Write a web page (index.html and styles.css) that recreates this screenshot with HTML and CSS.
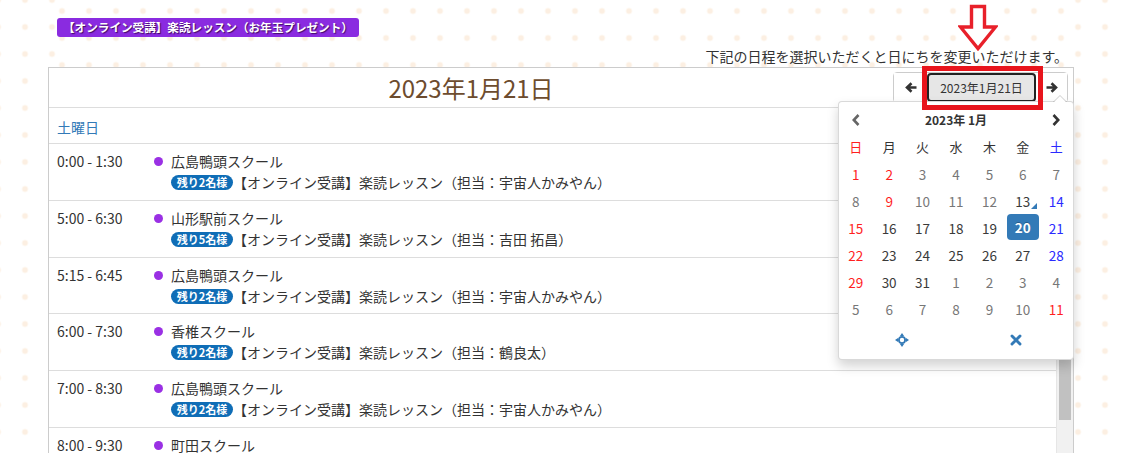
FILE: index.html
```html
<!DOCTYPE html>
<html lang="ja">
<head>
<meta charset="utf-8">
<title>楽読レッスン</title>
<link rel="stylesheet" href="styles.css">
</head>
<body>
<div class="wrap">
  <div class="top">
    <span class="tag">【オンライン受講】楽読レッスン（お年玉プレゼント）</span>
    <p class="note">下記の日程を選択いただくと日にちを変更いただけます。</p>
    <svg class="red-arrow" width="40" height="50" viewBox="0 0 40 50">
      <polygon points="13.5,3.5 26.5,3.5 26.5,24 37.5,24 20,45.5 2.5,24 13.5,24" fill="#fff" stroke="#e8202a" stroke-width="3.4" stroke-linejoin="miter"/>
    </svg>
  </div>
  <div class="box">
    <div class="toolbar">
      <div class="tb-left"></div>
      <h2 class="title">2023年1月21日</h2>
      <div class="btn-group">
        <button class="btn nav" type="button">
          <svg width="12" height="11" viewBox="0 0 12 11"><path d="M11.5 5.5H2.5M6.5 1.2L2 5.5L6.5 9.8" fill="none" stroke="#333" stroke-width="2.6"/></svg>
        </button>
        <div class="date-wrap">
          <button class="btn date" type="button">2023年1月21日</button>
          <span class="highlight"></span>
        </div>
        <button class="btn nav" type="button">
          <svg width="12" height="11" viewBox="0 0 12 11"><path d="M0.5 5.5H9.5M5.5 1.2L10 5.5L5.5 9.8" fill="none" stroke="#333" stroke-width="2.6"/></svg>
        </button>
      </div>
    </div>
    <div class="list">
      <div class="list-body">
        <div class="heading">土曜日</div>
        <div class="row">
          <div class="time">0:00 - 1:30</div>
          <span class="marker"></span>
          <div class="info">
            <div class="name">広島鴨頭スクール</div>
            <div class="line2"><span class="remain">残り2名様</span><span>【オンライン受講】楽読レッスン（担当：宇宙人かみやん）</span></div>
          </div>
        </div>
        <div class="row">
          <div class="time">5:00 - 6:30</div>
          <span class="marker"></span>
          <div class="info">
            <div class="name">山形駅前スクール</div>
            <div class="line2"><span class="remain">残り5名様</span><span>【オンライン受講】楽読レッスン（担当：吉田 拓昌）</span></div>
          </div>
        </div>
        <div class="row">
          <div class="time">5:15 - 6:45</div>
          <span class="marker"></span>
          <div class="info">
            <div class="name">広島鴨頭スクール</div>
            <div class="line2"><span class="remain">残り2名様</span><span>【オンライン受講】楽読レッスン（担当：宇宙人かみやん）</span></div>
          </div>
        </div>
        <div class="row">
          <div class="time">6:00 - 7:30</div>
          <span class="marker"></span>
          <div class="info">
            <div class="name">香椎スクール</div>
            <div class="line2"><span class="remain">残り2名様</span><span>【オンライン受講】楽読レッスン（担当：鶴良太）</span></div>
          </div>
        </div>
        <div class="row">
          <div class="time">7:00 - 8:30</div>
          <span class="marker"></span>
          <div class="info">
            <div class="name">広島鴨頭スクール</div>
            <div class="line2"><span class="remain">残り2名様</span><span>【オンライン受講】楽読レッスン（担当：宇宙人かみやん）</span></div>
          </div>
        </div>
        <div class="row">
          <div class="time">8:00 - 9:30</div>
          <span class="marker"></span>
          <div class="info">
            <div class="name">町田スクール</div>
            <div class="line2"><span class="remain">残り2名様</span><span>【オンライン受講】楽読レッスン</span></div>
          </div>
        </div>
      </div>
      <div class="scrollbar"><div class="thumb"></div></div>
    </div>

    <div class="picker">
      <table class="cal">
        <thead>
          <tr class="cal-head">
            <th class="prev"><svg width="8" height="12" viewBox="0 0 8 12"><path d="M6.5 1L1.8 6L6.5 11" fill="none" stroke="#666" stroke-width="2.6"/></svg></th>
            <th colspan="5" class="month">2023年 1月</th>
            <th class="next"><svg width="8" height="12" viewBox="0 0 8 12"><path d="M1.5 1L6.2 6L1.5 11" fill="none" stroke="#333" stroke-width="2.6"/></svg></th>
          </tr>
          <tr class="dow">
            <th class="hol">日</th><th>月</th><th>火</th><th>水</th><th>木</th><th>金</th><th class="sat">土</th>
          </tr>
        </thead>
        <tbody>
          <tr><td class="hol">1</td><td class="hol">2</td><td class="old">3</td><td class="old">4</td><td class="old">5</td><td class="old">6</td><td class="old">7</td></tr>
          <tr><td class="old">8</td><td class="hol">9</td><td class="old">10</td><td class="old">11</td><td class="old">12</td><td class="today">13</td><td class="sat">14</td></tr>
          <tr><td class="hol">15</td><td>16</td><td>17</td><td>18</td><td>19</td><td class="active"><span>20</span></td><td class="sat">21</td></tr>
          <tr><td class="hol">22</td><td>23</td><td>24</td><td>25</td><td>26</td><td>27</td><td class="sat">28</td></tr>
          <tr><td class="hol">29</td><td>30</td><td>31</td><td class="old">1</td><td class="old">2</td><td class="old">3</td><td class="old">4</td></tr>
          <tr><td class="old">5</td><td class="old">6</td><td class="old">7</td><td class="old">8</td><td class="old">9</td><td class="old">10</td><td class="hol">11</td></tr>
        </tbody>
      </table>
      <div class="cal-foot">
        <span class="foot-btn">
          <svg width="14" height="14" viewBox="0 0 14 14">
            <circle cx="7" cy="7" r="3.1" fill="none" stroke="#337ab7" stroke-width="1.8"/>
            <polygon points="7,0 4.9,3 9.1,3" fill="#337ab7"/>
            <polygon points="7,14 4.9,11 9.1,11" fill="#337ab7"/>
            <polygon points="0,7 3,4.9 3,9.1" fill="#337ab7"/>
            <polygon points="14,7 11,4.9 11,9.1" fill="#337ab7"/>
          </svg>
        </span>
        <span class="foot-btn">
          <svg width="12" height="12" viewBox="0 0 12 12"><path d="M2 2L10 10M10 2L2 10" stroke="#337ab7" stroke-width="2.9" stroke-linecap="round"/></svg>
        </span>
      </div>
    </div>
  </div>
</div>
</body>
</html>
```

FILE: styles.css
```css
* { box-sizing: border-box; }

html, body {
  margin: 0;
  height: 453px;
  overflow: hidden;
}

body {
  font-family: "Noto Sans CJK JP", "Noto Sans", sans-serif;
  color: #333;
  font-size: 14px;
  background-color: #fff;
  background-image: radial-gradient(circle at 13.5px 13.5px, #fcefe2 2.6px, rgba(252, 239, 226, 0) 3.3px);
  background-size: 27px 27px;
  background-position: 11.5px -13.5px;
}

.wrap {
  margin-left: 48px;
  width: 1026px;
  position: relative;
}

.top {
  position: relative;
  margin-left: 8px;
  height: 67px;
  padding-top: 18px;
  background-color: #fff;
  background-image: radial-gradient(circle at 13.5px 13.5px, #fcefe2 2.6px, rgba(252, 239, 226, 0) 3.3px);
  background-size: 27px 27px;
  background-position: -7.5px -2.5px;
}

.tag {
  display: block;
  width: max-content;
  margin-left: 1px;
  height: 19px;
  line-height: 19px;
  padding: 0 6px;
  background: #8a2be0;
  color: #fff;
  font-size: 11.6px;
  font-weight: bold;
  border-radius: 3px;
  text-shadow: 1px 1px 1px rgba(40, 0, 60, 0.75);
}

.note {
  margin: 9px 0 1px;
  line-height: 20px;
  font-size: 14px;
  text-align: right;
  padding-right: 6px;
  color: #333;
}

.red-arrow {
  position: absolute;
  left: 902px;
  top: 3px;
}

.box {
  position: relative;
  border: 1px solid #ccc;
  background: #fff;
  height: 420px;
}

.toolbar {
  display: flex;
  justify-content: space-between;
  align-items: center;
  height: 40px;
  border-bottom: 1px solid #ddd;
  padding-right: 5px;
}

.tb-left { width: 0; }

.title {
  margin: 0;
  font-size: 24px;
  font-weight: normal;
  line-height: 1;
  color: #6d4c2e;
}

.btn-group {
  align-self: flex-start;
  margin-top: 4px;
  display: flex;
  height: 31px;
  border: 1px solid #ccc;
  border-radius: 4px;
  background: #fff;
}

.btn {
  font-family: inherit;
  margin: 0;
  padding: 0;
  background: #fff;
  border: none;
  cursor: pointer;
  display: flex;
  align-items: center;
  justify-content: center;
}

.nav {
  width: 33px;
  height: 29px;
}

.nav:last-child { width: 31px; }

.date-wrap {
  position: relative;
}

.date {
  width: 109px;
  height: 29px;
  background: #e6e6e6;
  border: 2px solid #222;
  border-radius: 4px;
  font-size: 12px;
  color: #333;
}

.highlight {
  position: absolute;
  left: -5px;
  top: -7px;
  width: 121px;
  height: 44px;
  border: 5px solid #e8141c;
  z-index: 5;
}

.list {
  display: flex;
  height: 380px;
}

.list-body {
  flex: 1;
}

.heading {
  height: 36px;
  padding: 9px 8px 0;
  line-height: 20px;
  color: #337ab7;
  border-bottom: 1px solid #ddd;
}

.row {
  display: flex;
  align-items: flex-start;
  height: 56.8px;
  padding: 7px 0 0 8px;
  border-bottom: 1px solid #ddd;
  line-height: 21px;
}

.time {
  width: 97px;
  flex: none;
}

.marker {
  flex: none;
  width: 9px;
  height: 9px;
  border-radius: 50%;
  background: #9a30e4;
  margin: 6px 8px 0 0;
}

.info { flex: 1; }

.line2 {
  display: flex;
  align-items: center;
  white-space: nowrap;
}

.remain {
  display: inline-block;
  flex: none;
  width: 62px;
  height: 15px;
  line-height: 15px;
  text-align: center;
  border-radius: 8px;
  background: #0f6db6;
  color: #fff;
  font-size: 11px;
  font-weight: bold;
}

.scrollbar {
  width: 17px;
  background: #f1f1f1;
  border-left: 1px solid #e6e6e6;
  padding: 0 2px;
}

.thumb {
  margin-top: 150px;
  height: 162px;
  background: #c1c1c1;
}

/* date picker popup */
.picker {
  position: absolute;
  left: 789px;
  top: 33px;
  width: 236px;
  height: 259px;
  padding: 4px 0 0;
  background: #fff;
  border: 1px solid rgba(0, 0, 0, 0.15);
  border-radius: 4px;
  box-shadow: 0 6px 12px rgba(0, 0, 0, 0.175);
  z-index: 3;
}

.picker::before {
  content: "";
  position: absolute;
  top: -7px;
  right: 6px;
  border-left: 7px solid transparent;
  border-right: 7px solid transparent;
  border-bottom: 7px solid rgba(0, 0, 0, 0.2);
}

.picker::after {
  content: "";
  position: absolute;
  top: -6px;
  right: 7px;
  border-left: 6px solid transparent;
  border-right: 6px solid transparent;
  border-bottom: 6px solid #fff;
}

.cal {
  width: 234px;
  border-collapse: collapse;
  table-layout: fixed;
}

.cal th,
.cal td {
  padding: 0;
  height: 27px;
  text-align: center;
  vertical-align: middle;
  font-weight: normal;
}

.cal td {
  font-size: 13.5px;
  color: #3a3a3a;
  position: relative;
}

.cal .dow th {
  font-size: 13px;
  color: #333;
}

.cal .month {
  font-size: 12px;
  font-weight: bold;
  color: #333;
}

.cal .prev svg,
.cal .next svg {
  display: block;
  margin: 0 auto;
}

.cal .hol { color: #ff1f1f; }
.cal .sat { color: #2a2aff; }
.cal .old { color: #777; }
.cal .dow th.hol { color: #ff1f1f; }
.cal .dow th.sat { color: #2a2aff; }

.cal td.today::before {
  content: "";
  position: absolute;
  right: 3px;
  bottom: 5px;
  border-style: solid;
  border-color: transparent;
  border-width: 0 0 6px 6px;
  border-bottom-color: #337ab7;
}

.cal td.active span {
  display: block;
  height: 26px;
  line-height: 26px;
  margin: 0 1px 1px;
  background: #337ab7;
  color: #fff;
  font-weight: bold;
  border-radius: 4px;
  text-shadow: 0 -1px 0 rgba(0, 0, 0, 0.25);
}

.cal-foot {
  display: flex;
  margin-top: 4px;
  height: 28px;
}

.foot-btn {
  flex: 1;
  display: flex;
  align-items: center;
  justify-content: center;
}

.foot-btn:first-child { padding-left: 6px; }
```
